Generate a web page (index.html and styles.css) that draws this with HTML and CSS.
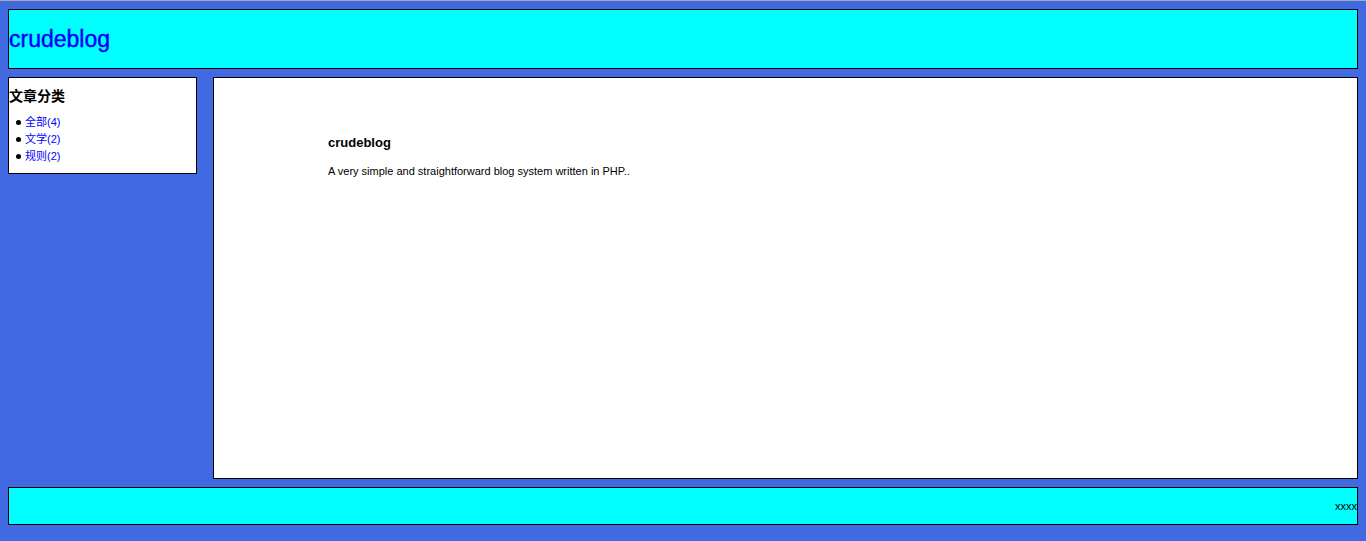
FILE: index.html
```html
<!DOCTYPE html>
<html lang="zh">
<head>
<meta charset="utf-8">
<title>crudeblog</title>
<link rel="stylesheet" href="styles.css">
</head>
<body>
<header class="site-header">
  <h1 class="site-title"><a href="#">crudeblog</a></h1>
</header>
<div class="layout">
  <aside class="sidebar">
    <h3 class="sidebar-title">文章分类</h3>
    <ul class="cat-list">
      <li><a href="#">全部(4)</a></li>
      <li><a href="#">文学(2)</a></li>
      <li><a href="#">规则(2)</a></li>
    </ul>
  </aside>
  <main class="main">
    <h2 class="post-title">crudeblog</h2>
    <p class="post-desc">A very simple and straightforward blog system written in PHP..</p>
  </main>
</div>
<footer class="site-footer">xxxx</footer>
</body>
</html>
```
FILE: styles.css
```css
html {
  background: #4169e1;
  border-top: 1px solid #a9a9a9;
}
body {
  margin: 8px;
  font-family: "Liberation Sans", Arial, "Noto Sans CJK SC", sans-serif;
  color: #000;
}
a {
  color: #0000ff;
  text-decoration: none;
}
.site-header {
  height: 58px;
  background: #00ffff;
  border: 1px solid #000;
  display: flex;
  align-items: center;
}
.site-title {
  margin: 0;
  font-size: 23px;
  font-weight: normal;
  line-height: 1;
  -webkit-text-stroke: 0.4px #0000ff;
}
.layout {
  display: flex;
  align-items: flex-start;
  gap: 16px;
  margin-top: 8px;
}
.sidebar {
  width: 187px;
  height: 95px;
  background: #fff;
  border: 1px solid #000;
}
.sidebar-title {
  margin: 10px 0 0;
  font-size: 14px;
  font-weight: bold;
  line-height: 16px;
}
.cat-list {
  margin: 10px 0 0;
  padding-left: 16px;
  font-size: 11px;
  line-height: 17px;
  list-style: none;
}
.cat-list li::before {
  content: "";
  display: inline-block;
  width: 5px;
  height: 5px;
  border-radius: 50%;
  background: #000;
  margin: 0 4px 0 -9px;
  vertical-align: 1px;
}
.main {
  flex: 1;
  height: 400px;
  background: #fff;
  border: 1px solid #000;
  padding: 0 0 0 114px;
  box-sizing: content-box;
}
.post-title {
  margin: 57px 0 0;
  font-size: 13px;
  font-weight: bold;
  line-height: 16px;
}
.post-desc {
  margin: 13px 0 0;
  font-size: 11px;
  line-height: 14px;
}
.site-footer {
  margin-top: 8px;
  height: 36px;
  background: #00ffff;
  border: 1px solid #000;
  display: flex;
  align-items: center;
  justify-content: flex-end;
  font-size: 11px;
}
```
